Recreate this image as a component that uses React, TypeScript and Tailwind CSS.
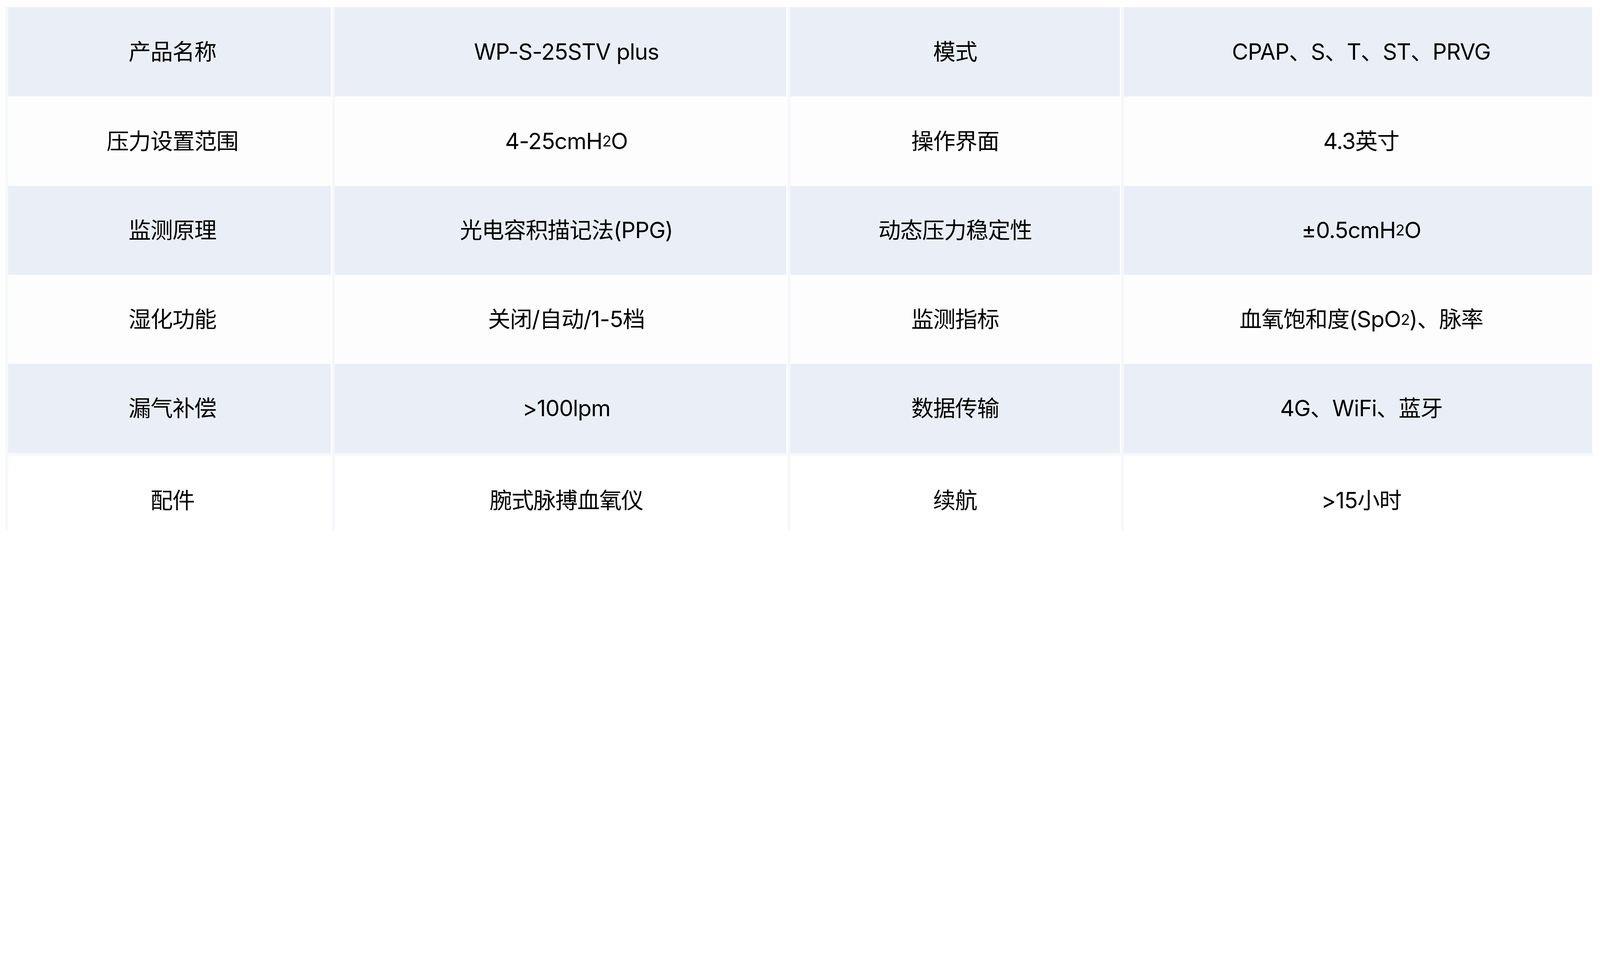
// sizes are in vw so the table keeps the screenshot's proportions at any device scale
// (1 screenshot px = 0.014142vw)

function Sub({ children }: { children: React.ReactNode }) {
  return <span className="text-[0.94vw] align-baseline">{children}</span>;
}

const rows: { cells: React.ReactNode[]; shaded: boolean }[] = [
  { shaded: true, cells: ["产品名称", "WP-S-25STV plus", "模式", "CPAP、S、T、ST、PRVG"] },
  {
    shaded: false,
    cells: [
      "压力设置范围",
      <>
        4-25cmH<Sub>2</Sub>O
      </>,
      "操作界面",
      "4.3英寸",
    ],
  },
  {
    shaded: true,
    cells: [
      "监测原理",
      "光电容积描记法(PPG)",
      "动态压力稳定性",
      <>
        ±0.5cmH<Sub>2</Sub>O
      </>,
    ],
  },
  {
    shaded: false,
    cells: [
      "湿化功能",
      "关闭/自动/1-5档",
      "监测指标",
      <>
        血氧饱和度(SpO<Sub>2</Sub>)、脉率
      </>,
    ],
  },
  { shaded: true, cells: ["漏气补偿", ">100lpm", "数据传输", "4G、WiFi、蓝牙"] },
];

// column widths + small optical offsets measured on the screenshot
const cols = [
  "w-[20.167vw] pl-[0.368vw]",
  "w-[28.228vw] pl-[0.735vw]",
  "w-[20.619vw]",
  "w-[29.274vw] pl-[0.396vw]",
];

const Divider = ({ short }: { short?: boolean }) => (
  <div
    className={`ml-[0.0707vw] w-[0.1697vw] bg-[#f5f7fb] ${short ? "h-[4.6245vw] self-start" : ""}`}
  />
);

const Row = ({
  cells,
  shaded,
  last,
  tall,
}: {
  cells: React.ReactNode[];
  shaded: boolean;
  last?: boolean;
  tall?: boolean;
}) => (
  <div className={`flex ${tall ? "h-[5.6vw]" : "h-[5.572vw]"}`}>
    <div className={`w-[0.1556vw] bg-[#f5f7fb] ${last ? "h-[4.6245vw] self-start" : ""}`} />
    {cells.map((c, i) => (
      <div key={i} className="flex">
        {i > 0 && <Divider short={last} />}
        <div
          className={`${cols[i]} flex items-center justify-center whitespace-nowrap ${
            last ? "bg-white" : shaded ? "bg-[#eaeff7]" : "bg-[#fdfdfd]"
          }`}
        >
          {c}
        </div>
      </div>
    ))}
  </div>
);

const App = () => {
  return (
    <div
      className="w-full h-[34.59vw] overflow-hidden bg-white text-black text-[1.4vw] leading-none tracking-[-0.02em]"
      style={{ fontFamily: 'Inter, "Noto Sans CJK SC", sans-serif' }}
    >
      <div className="pt-[0.438vw] pl-[0.354vw]">
        {rows.map((r, i) => (
          <Row key={i} cells={r.cells} shaded={r.shaded} tall={i === 0} />
        ))}
        <div className="h-[0.1697vw] w-[99.23vw] bg-[#f6f8fb]" />
        <Row last shaded={false} cells={["配件", "腕式脉搏血氧仪", "续航", ">15小时"]} />
      </div>
    </div>
  );
};

export default App;
